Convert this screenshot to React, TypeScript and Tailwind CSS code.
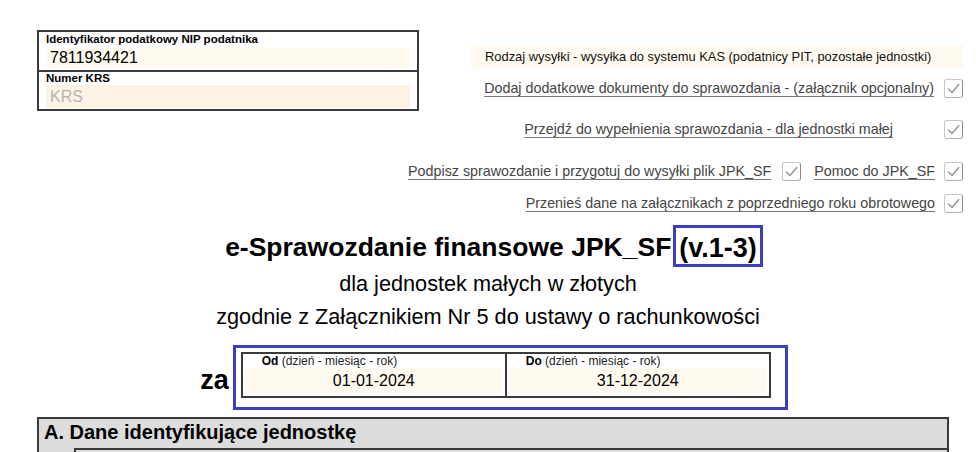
import React from "react";

function Check() {
  return (
    <span className="inline-flex h-[19px] w-[19px] shrink-0 items-center justify-center rounded-[3px] border border-[#c8c8c8] border-r-[#8a8a8a] border-b-[#b0b0b0] bg-white">
      <svg width="13" height="11" viewBox="0 0 13 11" fill="none">
        <path d="M1.5 6 L5 9.5 L11.8 1.5" stroke="#8c8c8c" strokeWidth="1.2" strokeLinecap="round" strokeLinejoin="round" />
      </svg>
    </span>
  );
}

function LinkRow({ text, className = "" }: { text: string; className?: string }) {
  return (
    <span className={`whitespace-nowrap text-[14.3px] leading-none text-[#444] underline decoration-[#777] underline-offset-[3px] ${className}`}>{text}</span>
  );
}

export default function App() {
  return (
    <div
      className="relative h-[452px] w-[976px] overflow-hidden bg-white text-black"
      style={{ fontFamily: '"Liberation Sans", Arial, sans-serif' }}
    >
      {/* top area */}
      <div className="flex items-start">
        {/* left box */}
        <div className="ml-[37px] mt-[30px] w-[382px] shrink-0 border-2 border-[#3a3a3a]">
          <div className="border-b-2 border-[#3a3a3a] px-[7px] pb-[2px] pt-[1px]">
            <div className="text-[11.5px] font-bold leading-[13px]">Identyfikator podatkowy NIP podatnika</div>
            <div className="mt-[2px] h-[20px] bg-[#fffaef] pl-[4px] text-[16px] leading-[20px]">7811934421</div>
          </div>
          <div className="px-[7px] pb-[1px]">
            <div className="text-[11.5px] font-bold leading-[13px]">Numer KRS</div>
            <div className="h-[23px] bg-[#fdf4e6] pl-[4px] text-[16px] leading-[24px] text-[#b4b4b4]">KRS</div>
          </div>
        </div>
        {/* right column */}
        <div className="ml-auto mr-[13px] mt-[45px] flex min-w-0 flex-col items-end whitespace-nowrap">
          <div className="flex h-[23px] w-[492px] shrink-0 items-center bg-[#fffaef] pl-[14px] text-[12.9px] text-[#111]">
            Rodzaj wysyłki - wysyłka do systemu KAS (podatnicy PIT, pozostałe jednostki)
          </div>
          <div className="mt-[11px] flex shrink-0 items-center gap-[10px]">
            <LinkRow text="Dodaj dodatkowe dokumenty do sprawozdania - (załącznik opcjonalny)" />
            <Check />
          </div>
          <div className="mt-[22px] flex shrink-0 items-center">
            <LinkRow text="Przejdź do wypełnienia sprawozdania - dla jednostki małej" className="mr-[51px]" />
            <Check />
          </div>
          <div className="mt-[23px] flex shrink-0 items-center">
            <LinkRow text="Podpisz sprawozdanie i przygotuj do wysyłki plik JPK_SF" className="mr-[11px]" />
            <Check />
            <LinkRow text="Pomoc do JPK_SF" className="ml-[13px] mr-[9px]" />
            <Check />
          </div>
          <div className="mt-[13px] flex shrink-0 items-center gap-[9px]">
            <LinkRow text="Przenieś dane na załącznikach z poprzedniego roku obrotowego" />
            <Check />
          </div>
        </div>
      </div>

      {/* title */}
      <div className="mt-[12px] flex items-center justify-center pl-[12px]">
        <span className="mt-[3px] text-[26.5px] font-bold leading-none">e-Sprawozdanie finansowe JPK_SF</span>
        <span className="ml-[2px] flex h-[42px] items-center border-[3px] border-[#3d3dc0] pl-[3px] pr-[3px] pt-[5px] text-[27px] font-bold leading-none">
          (v.1-3)
        </span>
      </div>
      <div className="mt-[3px] text-center text-[21.7px] leading-[28px]">dla jednostek małych w złotych</div>
      <div className="mt-[5px] text-center text-[21.7px] leading-[28px]">
        zgodnie z Załącznikiem Nr 5 do ustawy o rachunkowości
      </div>

      {/* za row */}
      <div className="mt-[14px] flex items-center justify-center pl-[12px]">
        <span className="mr-[4px] mt-[6px] text-[27px] font-bold leading-none">za</span>
        <div className="h-[65px] w-[555px] border-[3px] border-[#3d3dc0] pl-[5px] pt-[4px]">
          <div className="flex h-[46px] w-[530px] border-2 border-[#3a3a3a]">
            <div className="w-[264px] border-r-2 border-[#3a3a3a] px-[3px]">
              <div className="pl-[16px] text-[12px] leading-[14px] text-[#222]">
                <b className="text-black">Od</b> (dzień - miesiąc - rok)
              </div>
              <div className="h-[25px] bg-[#fffaef] text-center text-[16px] leading-[25px]">01-01-2024</div>
            </div>
            <div className="flex-1 px-[3px]">
              <div className="pl-[16px] text-[12px] leading-[14px] text-[#222]">
                <b className="text-black">Do</b> (dzień - miesiąc - rok)
              </div>
              <div className="h-[25px] bg-[#fffaef] text-center text-[16px] leading-[25px]">31-12-2024</div>
            </div>
          </div>
        </div>
      </div>

      {/* section A */}
      <div className="ml-[37px] mt-[7px] h-[40px] w-[912px] border-2 border-[#3a3a3a] bg-[#dcdcdc]">
        <div className="pl-[5px] pt-[2px] text-[20px] font-bold leading-[22px]">
          A. Dane identyfikujące jednostkę
        </div>
        <div className="ml-[35px] mt-[5px] h-[10px] border-l-2 border-t-2 border-[#3a3a3a]" />
      </div>
    </div>
  );
}
